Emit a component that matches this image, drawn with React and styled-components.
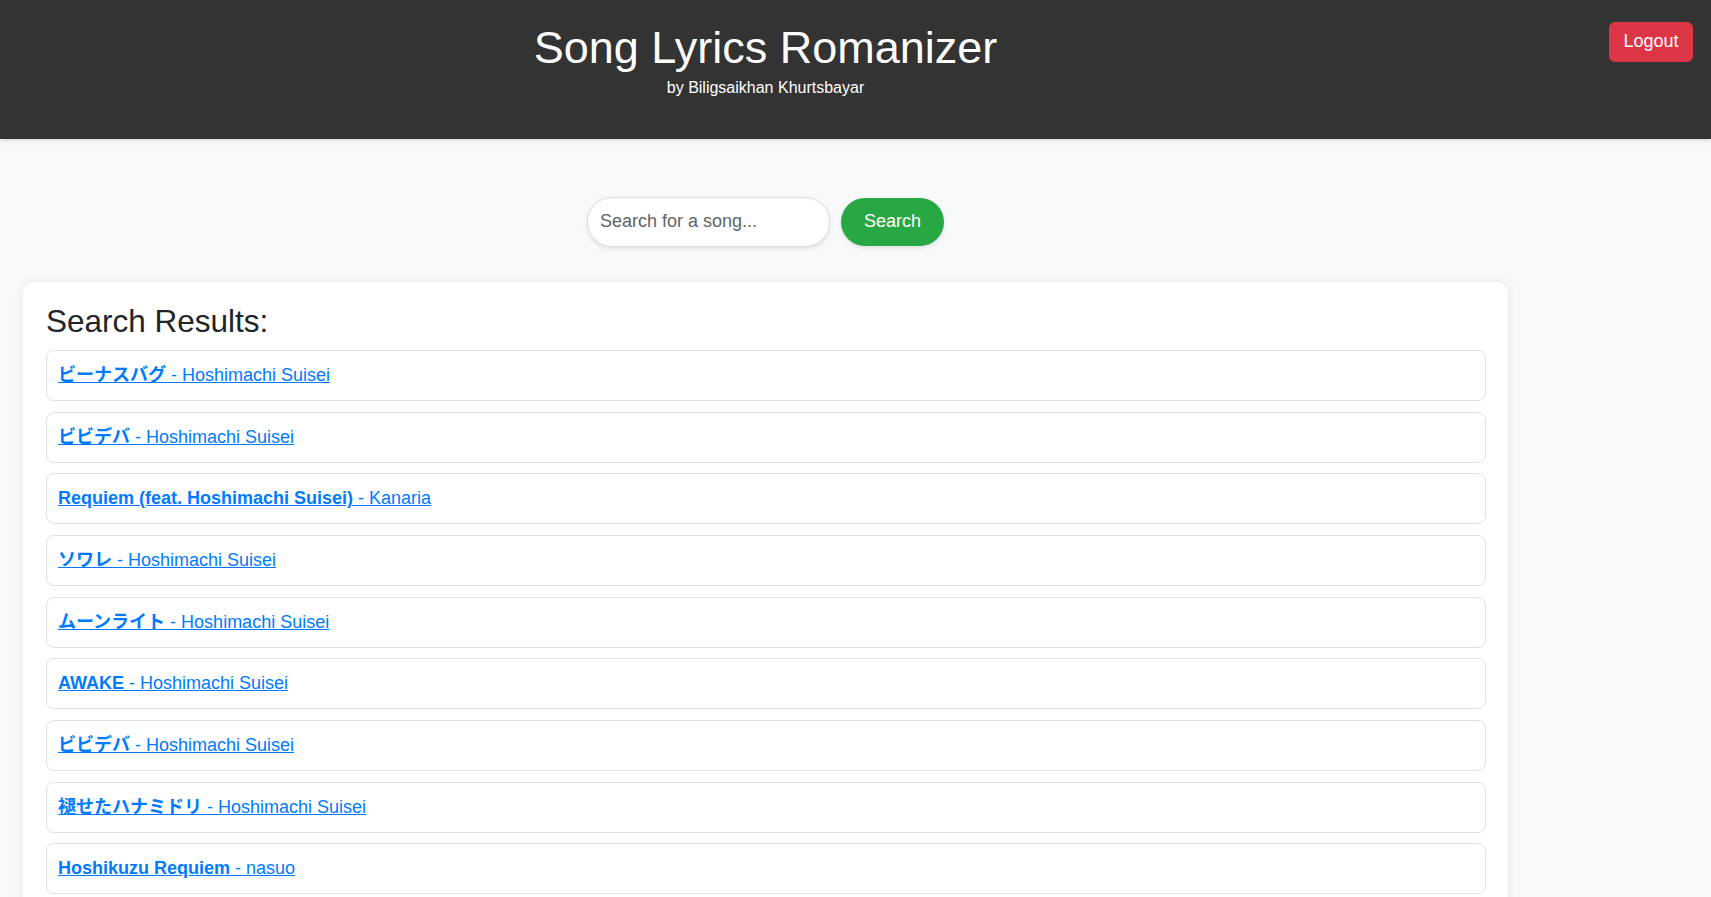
import React from "react";
import styled, { createGlobalStyle } from "styled-components";

const GlobalStyle = createGlobalStyle`
  html { scrollbar-width: none; }
  html::-webkit-scrollbar { display: none; }
  body {
    margin: 0;
    background: #f8f9fa;
    font-family: "Liberation Sans", Arial, "Noto Sans CJK JP", sans-serif;
    color: #212529;
  }
  * { box-sizing: border-box; }
`;

const Header = styled.header`
  display: flex;
  align-items: flex-start;
  height: 139px;
  background: #333333;
  color: #ffffff;
  box-shadow: 0 2px 4px rgba(0, 0, 0, 0.12);
`;

const TitleBlock = styled.div`
  flex: 0 0 1531px;
  padding-top: 22px;
  text-align: center;
`;

const Title = styled.h1`
  margin: 0;
  font-size: 45px;
  font-weight: 400;
  line-height: 1.15;
`;

const Subtitle = styled.p`
  margin: 5.5px 0 0;
  font-size: 16px;
  line-height: 1.15;
`;

const LogoutButton = styled.button`
  margin: 21.5px 18px 0 auto;
  height: 40.5px;
  padding: 0 14.5px;
  border: none;
  border-radius: 6px;
  background: #dc3545;
  color: #ffffff;
  font-family: inherit;
  font-size: 18px;
  cursor: pointer;
`;

const Main = styled.main`
  width: 1531px;
  padding: 57.5px 23px 0;
`;

const SearchForm = styled.form`
  display: flex;
  justify-content: center;
  align-items: center;
  gap: 11px;
  margin-bottom: 35px;
`;

const SearchInput = styled.input`
  width: 243px;
  height: 50px;
  padding: 0 12px;
  border: 1px solid #dddddd;
  border-radius: 25px;
  background: #ffffff;
  font-family: inherit;
  font-size: 18px;
  color: #333;
  box-shadow: 0 2px 4px rgba(0, 0, 0, 0.1);
  outline: none;
  &::placeholder { color: #5f6368; }
`;

const SearchButton = styled.button`
  height: 48px;
  padding: 0 23px;
  border: none;
  border-radius: 24px;
  background: #28a745;
  color: #ffffff;
  font-family: inherit;
  font-size: 18px;
  box-shadow: 0 2px 4px rgba(0, 0, 0, 0.1);
  cursor: pointer;
`;

const ResultsCard = styled.section`
  background: #ffffff;
  border-radius: 12px;
  padding: 21px 22px 22px 23px;
  box-shadow: 0 0 10px rgba(0, 0, 0, 0.08);
`;

const ResultsHeading = styled.h2`
  margin: 0 0 11.4px;
  font-size: 31.5px;
  font-weight: 400;
  line-height: 1.15;
  color: #212529;
`;

const ResultList = styled.ul`
  list-style: none;
  margin: 0;
  padding: 0;
  display: flex;
  flex-direction: column;
  gap: 10.65px;
`;

const ResultItem = styled.li`
  height: 51px;
  display: flex;
  align-items: center;
  padding: 0 11px;
  border: 1px solid #dee2e6;
  border-radius: 8px;
  background: #ffffff;
`;

const SongLink = styled.a`
  color: #007bff;
  font-size: 18px;
  line-height: 21px;
  text-decoration: underline;
  cursor: pointer;
`;

const SongTitle = styled.strong`
  font-weight: 700;
`;

const results = [
  { title: "ビーナスバグ", artist: "Hoshimachi Suisei" },
  { title: "ビビデバ", artist: "Hoshimachi Suisei" },
  { title: "Requiem (feat. Hoshimachi Suisei)", artist: "Kanaria" },
  { title: "ソワレ", artist: "Hoshimachi Suisei" },
  { title: "ムーンライト", artist: "Hoshimachi Suisei" },
  { title: "AWAKE", artist: "Hoshimachi Suisei" },
  { title: "ビビデバ", artist: "Hoshimachi Suisei" },
  { title: "褪せたハナミドリ", artist: "Hoshimachi Suisei" },
  { title: "Hoshikuzu Requiem", artist: "nasuo" },
];

export default function App() {
  return (
    <>
      <GlobalStyle />
      <Header>
        <TitleBlock>
          <Title>Song Lyrics Romanizer</Title>
          <Subtitle>by Biligsaikhan Khurtsbayar</Subtitle>
        </TitleBlock>
        <LogoutButton type="button">Logout</LogoutButton>
      </Header>
      <Main>
        <SearchForm onSubmit={(e) => e.preventDefault()}>
          <SearchInput type="text" placeholder="Search for a song..." />
          <SearchButton type="submit">Search</SearchButton>
        </SearchForm>
        <ResultsCard>
          <ResultsHeading>Search Results:</ResultsHeading>
          <ResultList>
            {results.map((r, i) => (
              <ResultItem key={i}>
                <SongLink href="#">
                  <SongTitle>{r.title}</SongTitle> - {r.artist}
                </SongLink>
              </ResultItem>
            ))}
          </ResultList>
        </ResultsCard>
      </Main>
    </>
  );
}
